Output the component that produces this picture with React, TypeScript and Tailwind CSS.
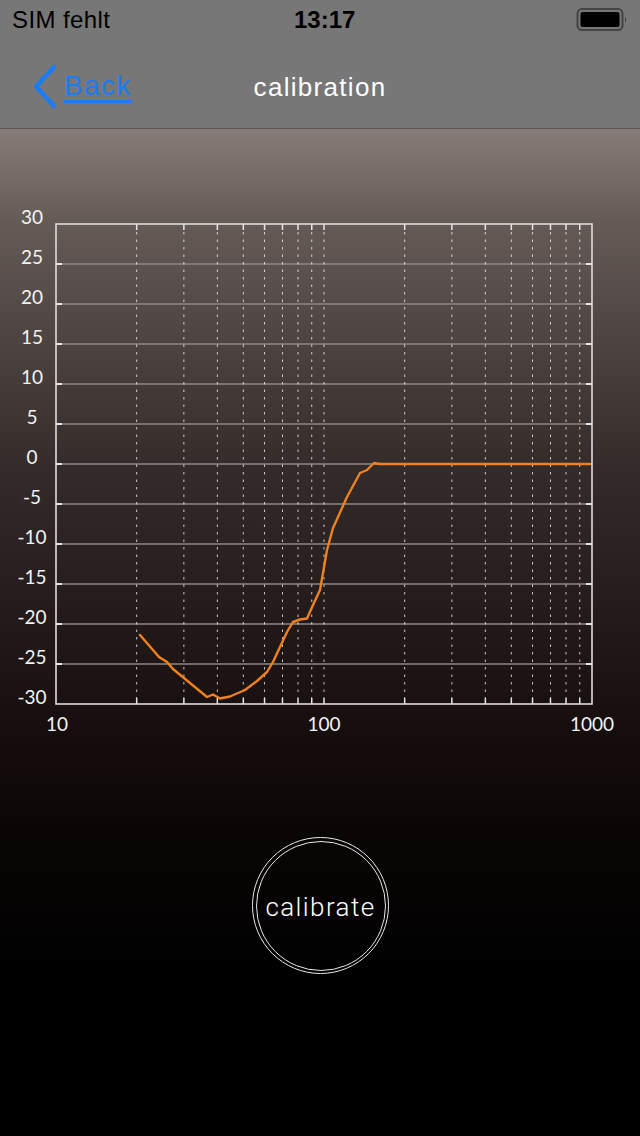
import React from 'react';

const yTicks = [30, 25, 20, 15, 10, 5, 0, -5, -10, -15, -20, -25, -30];
const minor = [20, 30, 40, 50, 60, 70, 80, 90, 100, 200, 300, 400, 500, 600, 700, 800, 900];

const LEFT = 56;
const RIGHT = 592;
const TOP = 224;
const BOTTOM = 704;

const fx = (f: number) => LEFT + ((RIGHT - LEFT) / 2) * Math.log10(f / 10);
const fy = (db: number) => TOP + ((30 - db) / 60) * (BOTTOM - TOP);

const curve =
  '140,635 159,657 167,662 173,669 207,697 213,694.5 220,698.5 230,696.5 245,690 257,681 267,672 273,662 287,632 293,622 300,619.5 307,618.5 313,605 320,590 323,573 327,550 333,528 347,497 360,473 367,470 374,463 380,464 590,464';

function StatusBar() {
  return (
    <div className="relative flex h-[40px] items-center px-[12px] font-['Liberation_Sans',Arial,sans-serif] text-[24px] text-black">
      <span className="tracking-[0.4px]">SIM fehlt</span>
      <span className="absolute left-[294px] font-bold">13:17</span>
      <svg className="ml-auto" width="54" height="40" viewBox="574 0 54 40">
        <rect x="577.5" y="9" width="45" height="21" rx="4.5" fill="none" stroke="#444" strokeWidth="2" />
        <rect x="580.5" y="12" width="39" height="15" rx="2" fill="#000" />
        <path d="M625 16.5 Q627.5 19.5 625 22.5 Z" fill="#444" />
      </svg>
    </div>
  );
}

function NavBar() {
  return (
    <div className="relative flex h-[89px] items-center border-b border-[#5b5651] pt-[3px] font-['Liberation_Sans',Arial,sans-serif]">
      <div className="ml-[32px] flex items-center gap-[4px] text-[#1b7cf8]">
        <svg width="28" height="46" viewBox="0 0 28 46">
          <polyline points="22,4 4,23.5 22,43" fill="none" stroke="#1b7cf8" strokeWidth="4.5" strokeLinecap="round" strokeLinejoin="round" />
        </svg>
        <span className="text-[28px] leading-none tracking-[1.4px] underline decoration-[3px] underline-offset-[5px]">Back</span>
      </div>
      <div className="absolute inset-x-0 pt-[3px] text-center text-[26px] tracking-[1.3px] text-white">calibration</div>
    </div>
  );
}

function Chart() {
  return (
    <svg width="640" height="560" viewBox="0 180 640 560" className="mt-[51px] block">
      {yTicks.slice(1, -1).map((v) => (
        <g key={v}>
          <line x1={LEFT} x2={RIGHT} y1={fy(v)} y2={fy(v)} stroke="#8d8886" strokeWidth="1.6" />
          <line x1={LEFT} x2={LEFT + 6} y1={fy(v)} y2={fy(v)} stroke="#e6e6e6" strokeWidth="2" />
          <line x1={RIGHT - 6} x2={RIGHT} y1={fy(v)} y2={fy(v)} stroke="#e6e6e6" strokeWidth="2" />
        </g>
      ))}
      {minor.map((f) => (
        <g key={f}>
          <line x1={fx(f)} x2={fx(f)} y1={TOP + 8} y2={BOTTOM - 6} stroke="#ffffff" strokeOpacity="0.75" strokeWidth="1" strokeDasharray="2.5 5" />
          <line x1={fx(f)} x2={fx(f)} y1={TOP} y2={TOP + 6} stroke="#e6e6e6" strokeWidth="1.5" />
          <line x1={fx(f)} x2={fx(f)} y1={BOTTOM - 6} y2={BOTTOM} stroke="#e6e6e6" strokeWidth="1.5" />
        </g>
      ))}
      <rect x={LEFT} y={TOP} width={RIGHT - LEFT} height={BOTTOM - TOP} fill="none" stroke="#dcdcdc" strokeWidth="1.6" />
      <polyline points={curve} fill="none" stroke="#f1801f" strokeWidth="2.4" strokeLinejoin="round" strokeLinecap="round" />
      <g fill="#f2f2f2" fontSize="19" fontFamily="Lato, 'Open Sans', sans-serif" fontWeight="400">
        {yTicks.map((v) => (
          <text key={v} x="32" y={fy(v)} textAnchor="middle">
            {v}
          </text>
        ))}
        <text x="57" y="731" textAnchor="middle">10</text>
        <text x="324" y="731" textAnchor="middle">100</text>
        <text x="592" y="731" textAnchor="middle">1000</text>
      </g>
    </svg>
  );
}

export default function App(): JSX.Element {
  return (
    <div className="flex h-[1136px] w-[640px] flex-col overflow-hidden bg-[#777777]">
      <StatusBar />
      <NavBar />
      <main className="flex flex-1 flex-col bg-[linear-gradient(to_bottom,#867d79_0px,#655c58_90px,#342c2a_335px,#150d0c_611px,#0a0505_711px,#000000_850px)]">
        <Chart />
        <div className="mt-[97px] flex justify-center pl-[1px]">
          <button className="flex h-[137px] w-[137px] items-center justify-center rounded-full border-[1.5px] border-[#e8e8e8] p-[2.5px]">
            <span className="flex h-full w-full items-center justify-center rounded-full border-[1.5px] border-[#e8e8e8] pt-[4px] font-['Roboto',Arial,sans-serif] text-[26px] font-light tracking-[1.4px] text-white">
              calibrate
            </span>
          </button>
        </div>
      </main>
    </div>
  );
}
